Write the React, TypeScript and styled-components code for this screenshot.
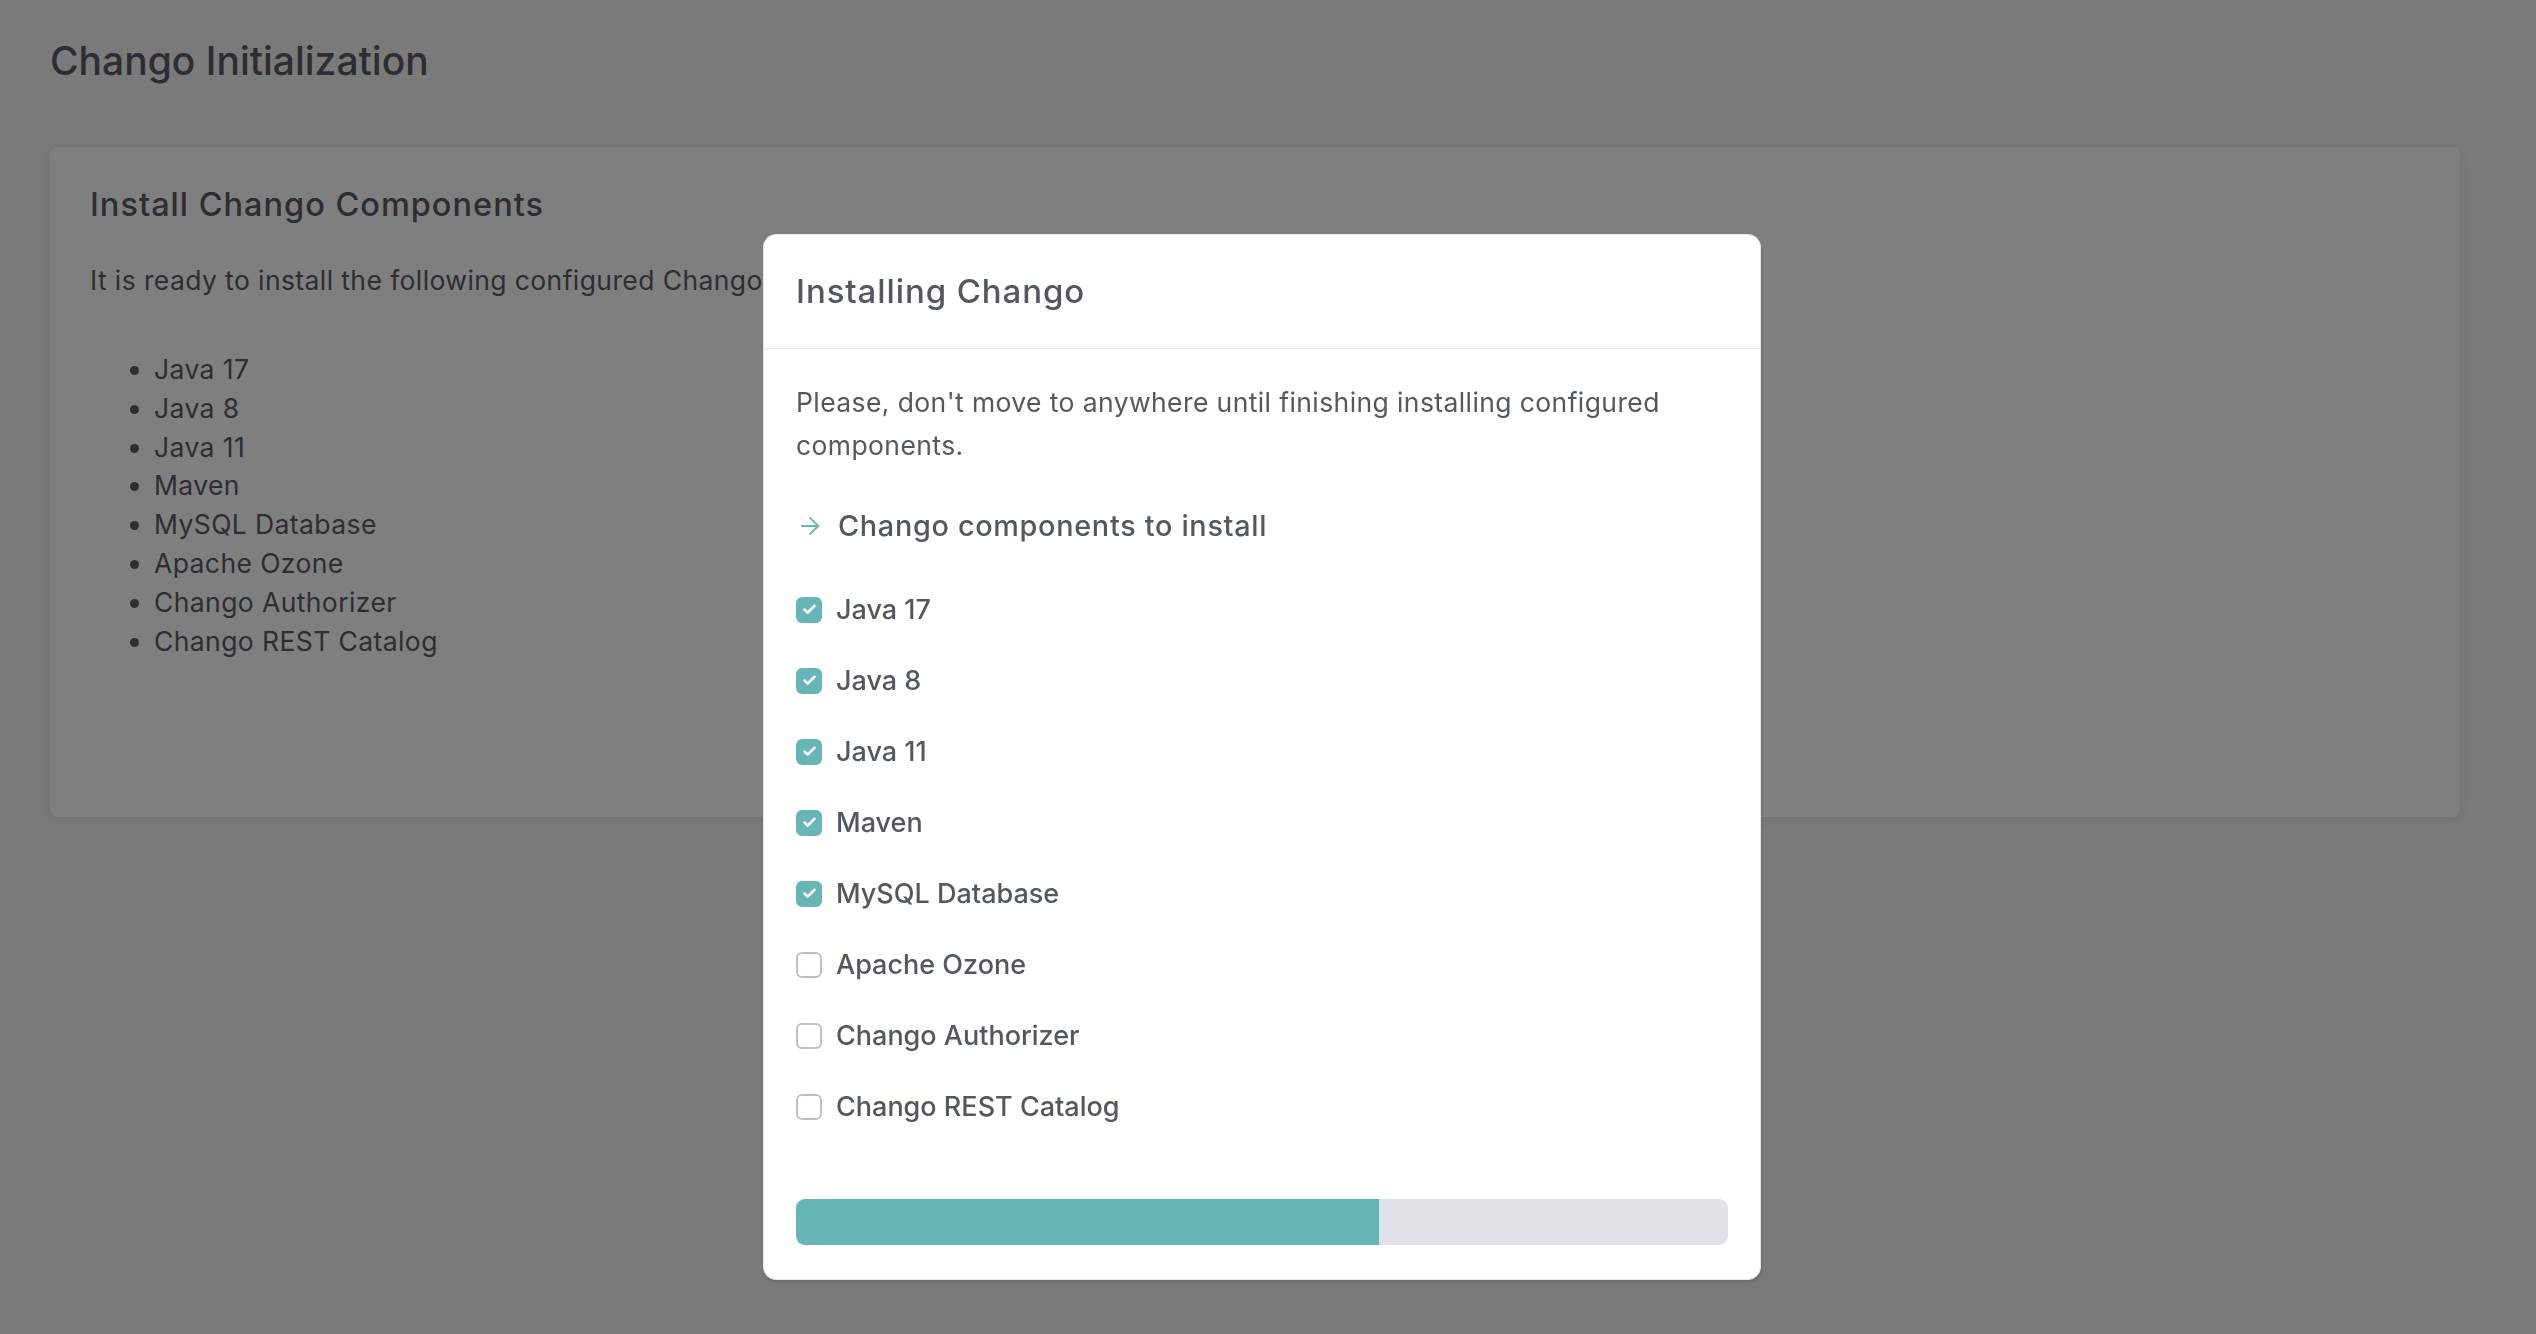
import * as React from "react"
import styled, { createGlobalStyle } from "styled-components"
import { ArrowRight, Check } from "lucide-react"

const palette = {
  teal: "#66b5b7",
  track: "#dfe2e7",
  text: "#525861",
  pageText: "#585d66",
  pageBg: "#f4f4f4",
  border: "#e4e7eb",
}

const components = [
  { name: "Java 17", done: true },
  { name: "Java 8", done: true },
  { name: "Java 11", done: true },
  { name: "Maven", done: true },
  { name: "MySQL Database", done: true },
  { name: "Apache Ozone", done: false },
  { name: "Chango Authorizer", done: false },
  { name: "Chango REST Catalog", done: false },
]

const GlobalStyle = createGlobalStyle`
  html, body {
    margin: 0;
    padding: 0;
    background: ${palette.pageBg};
    font-family: Inter, "Open Sans", "Liberation Sans", sans-serif;
    color: ${palette.pageText};
  }
  * { box-sizing: border-box; }
`

const Page = styled.div`
  position: relative;
  min-height: 1334px;
  padding: 38px 76px 0 50px;
`

const PageTitle = styled.h1`
  margin: 0;
  font-size: 39px;
  line-height: 46px;
  font-weight: 500;
`

const Card = styled.section`
  margin-top: 63px;
  height: 670px;
  background: #ffffff;
  border-radius: 8px;
  box-shadow: 0 2px 12px rgba(0, 0, 0, 0.07);
  padding: 38px 40px;
`

const CardTitle = styled.h2`
  margin: 0;
  font-size: 32.5px;
  line-height: 40px;
  font-weight: 500;
  letter-spacing: 1px;
`

const CardText = styled.p`
  margin: 36px 0 0;
  font-size: 26.5px;
  line-height: 38px;
  letter-spacing: 0.4px;
`

const BulletList = styled.ul`
  margin: 51px 0 0;
  padding-left: 64px;
  font-size: 26.5px;
  line-height: 38.8px;
  letter-spacing: 0.4px;
`

const Overlay = styled.div`
  position: fixed;
  inset: 0;
  background: rgba(0, 0, 0, 0.5);
  padding: 234px 0 0 763px;
`

const Modal = styled.div`
  width: 998px;
  background: #ffffff;
  border: 1.5px solid ${palette.border};
  border-radius: 13px;
  box-shadow: 1px 2px 3px rgba(0, 0, 0, 0.12);
  color: ${palette.text};
`

const ModalHeader = styled.div`
  padding: 32px 32px;
  border-bottom: 1.5px solid ${palette.border};
`

const ModalTitle = styled.h3`
  margin: 0;
  font-size: 33px;
  line-height: 49px;
  font-weight: 500;
  letter-spacing: 0.9px;
`

const ModalBody = styled.div`
  padding: 32px 32px 34px;
`

const Notice = styled.p`
  margin: 0;
  font-size: 26.5px;
  line-height: 43px;
  letter-spacing: 0.4px;
`

const SectionHeading = styled.h4`
  margin: 37px 0 0;
  display: flex;
  align-items: center;
  gap: 14px;
  font-size: 28.8px;
  line-height: 43px;
  font-weight: 500;
  letter-spacing: 0.7px;
  color: ${palette.text};

  svg {
    color: ${palette.teal};
    flex-shrink: 0;
  }
`

const CheckList = styled.div`
  margin-top: 27px;
  display: flex;
  flex-direction: column;
`

const CheckRow = styled.label`
  height: 71px;
  display: flex;
  align-items: center;
  gap: 14px;
  font-size: 27px;
  font-weight: 500;
`

const Box = styled.span<{ $checked: boolean }>`
  width: 26px;
  height: 26px;
  border-radius: 6px;
  display: inline-flex;
  align-items: center;
  justify-content: center;
  background: ${(p) => (p.$checked ? palette.teal : "#ffffff")};
  border: 2px solid ${(p) => (p.$checked ? palette.teal : "#bcc0c7")};
  color: #ffffff;
  flex-shrink: 0;
`

const Progress = styled.div`
  margin-top: 57px;
  height: 46px;
  border-radius: 9px;
  background: ${palette.track};
  overflow: hidden;
`

const ProgressFill = styled.div`
  height: 100%;
  background: ${palette.teal};
`

const App: React.FC = () => {
  const done = components.filter((c) => c.done).length
  const percent = (done / components.length) * 100

  return (
    <>
      <GlobalStyle />
      <Page>
        <PageTitle>Chango Initialization</PageTitle>
        <Card>
          <CardTitle>Install Chango Components</CardTitle>
          <CardText>It is ready to install the following configured Chango components.</CardText>
          <BulletList>
            {components.map((c) => (
              <li key={c.name}>{c.name}</li>
            ))}
          </BulletList>
        </Card>

        <Overlay>
          <Modal>
            <ModalHeader>
              <ModalTitle>Installing Chango</ModalTitle>
            </ModalHeader>
            <ModalBody>
              <Notice>
                Please, don't move to anywhere until finishing installing configured components.
              </Notice>
              <SectionHeading>
                <ArrowRight size={28} strokeWidth={1.6} />
                Chango components to install
              </SectionHeading>
              <CheckList>
                {components.map((c) => (
                  <CheckRow key={c.name}>
                    <Box $checked={c.done}>
                      {c.done && <Check size={15} strokeWidth={4} />}
                    </Box>
                    {c.name}
                  </CheckRow>
                ))}
              </CheckList>
              <Progress>
                <ProgressFill style={{ width: `${percent}%` }} />
              </Progress>
            </ModalBody>
          </Modal>
        </Overlay>
      </Page>
    </>
  )
}

export default App
